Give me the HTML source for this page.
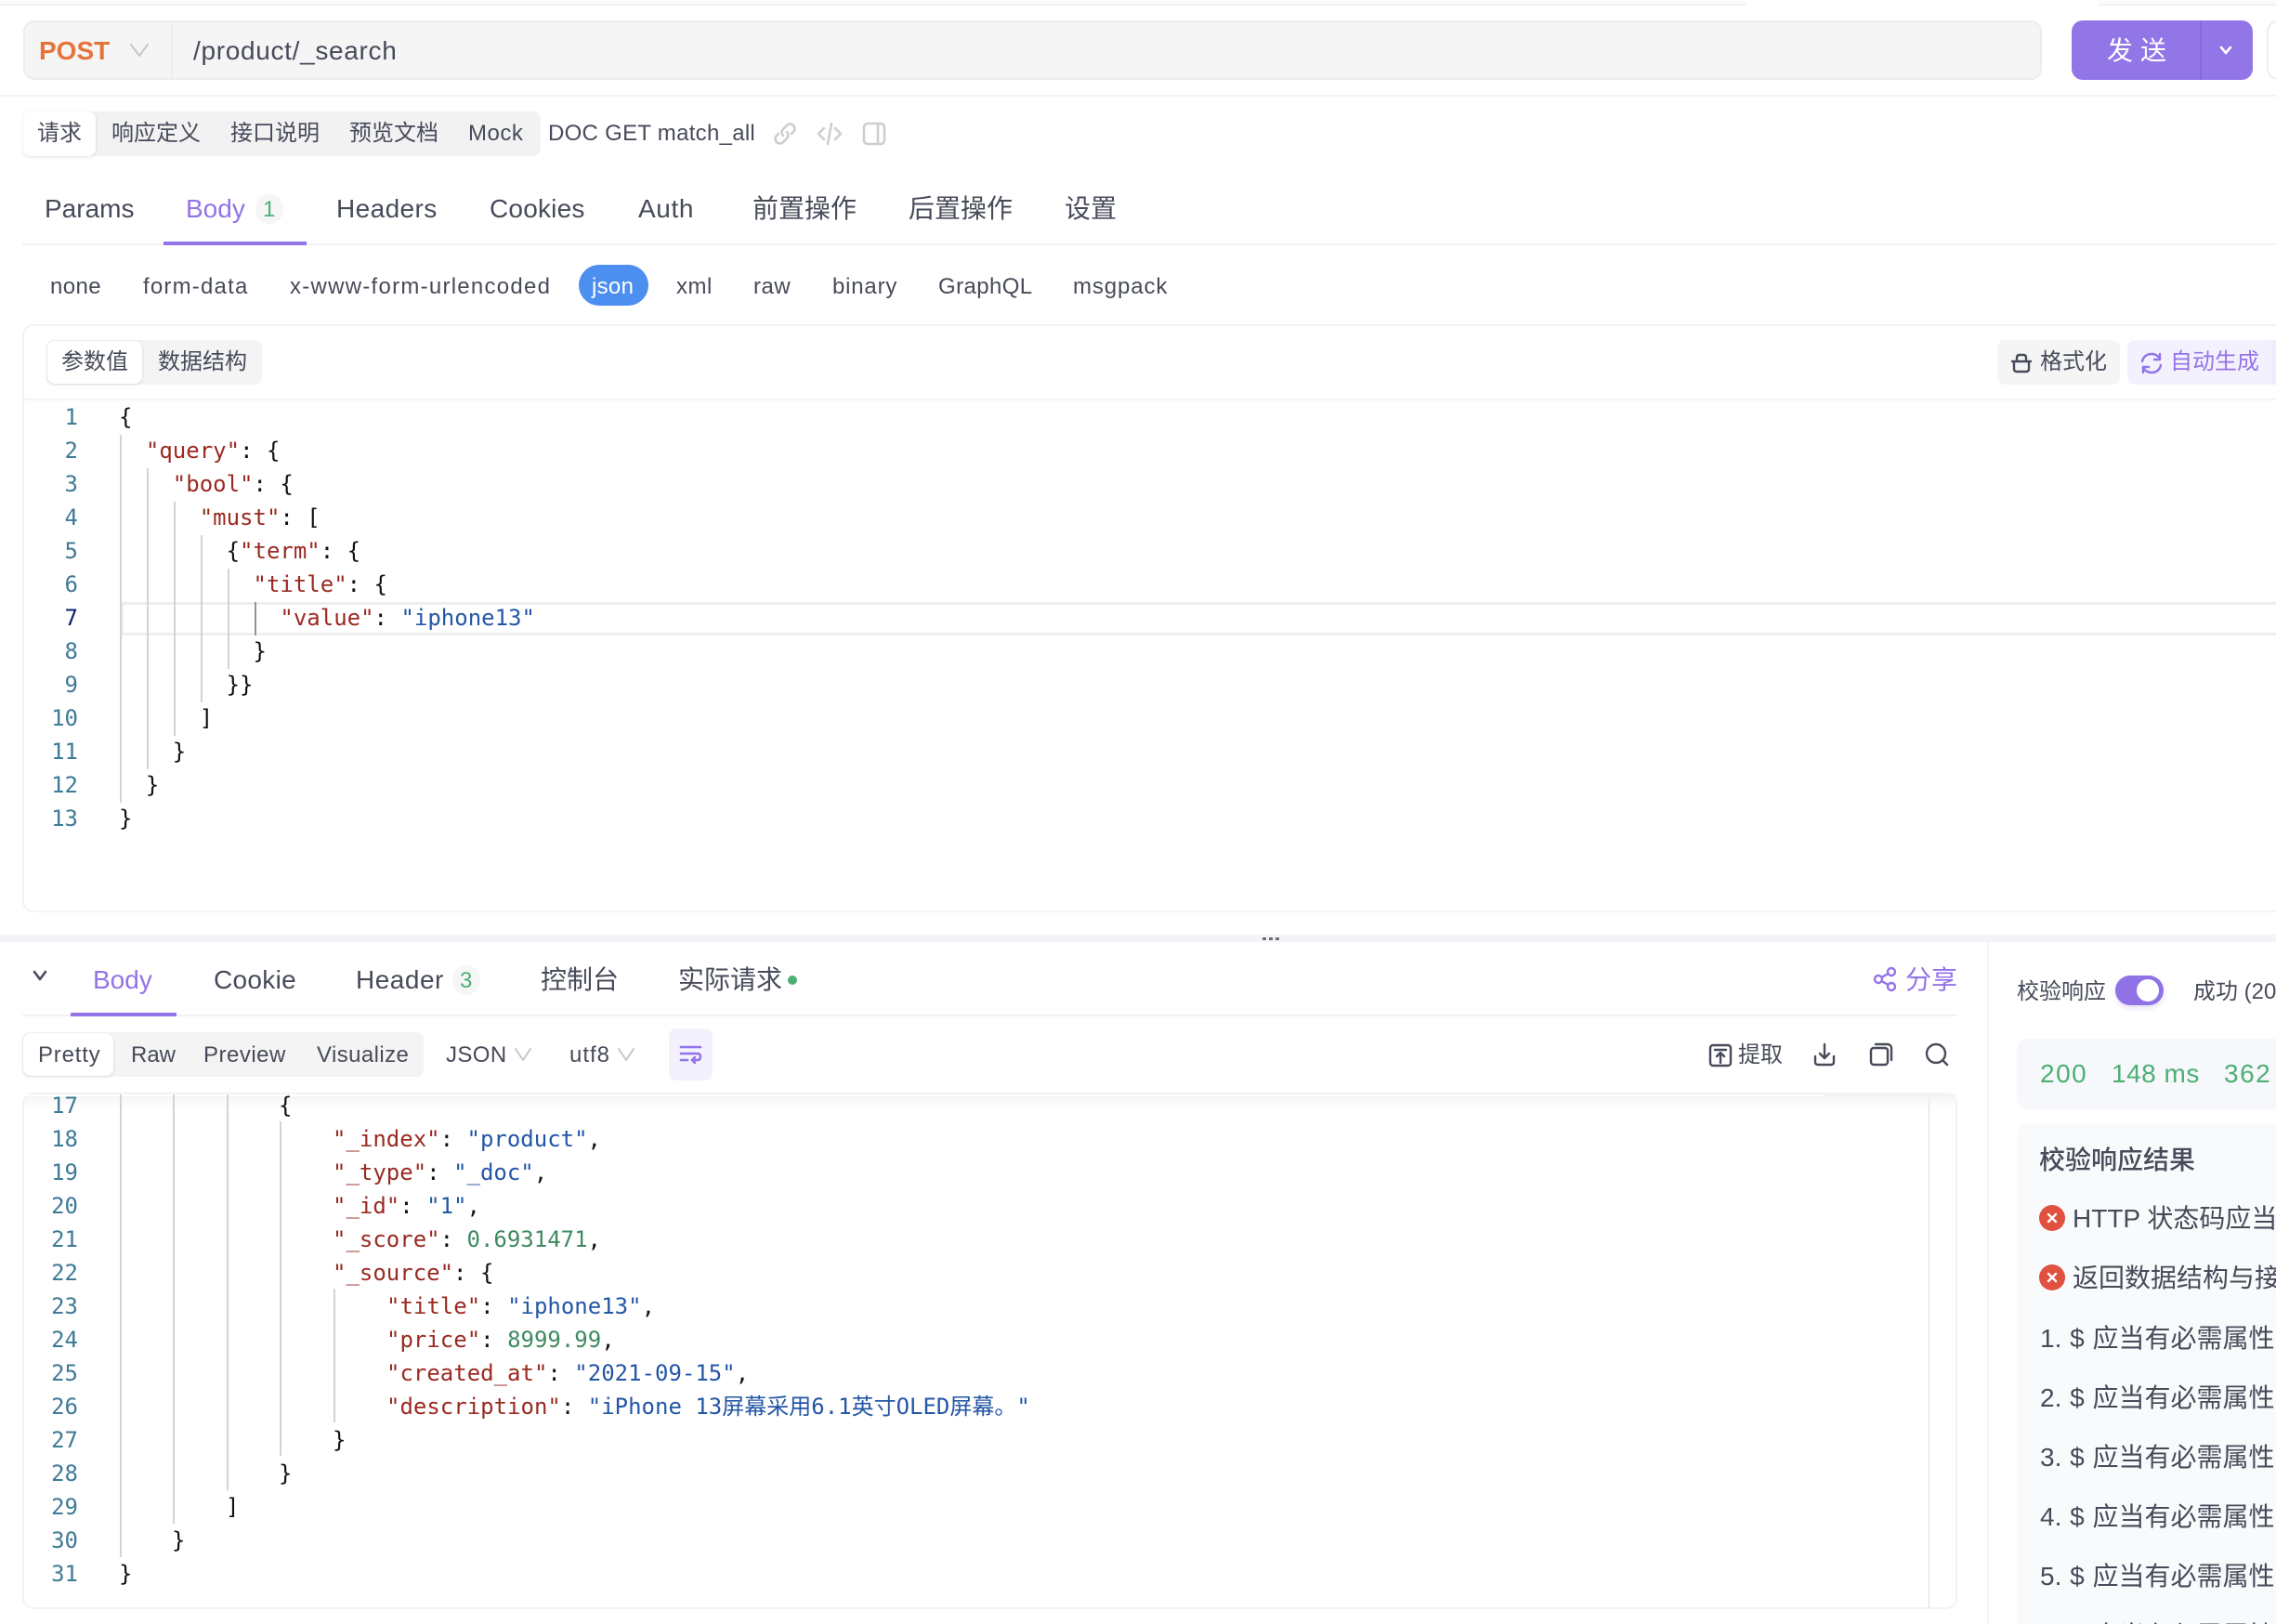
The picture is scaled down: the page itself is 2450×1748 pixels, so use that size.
<!DOCTYPE html>
<html><head><meta charset="utf-8"><style>
*{box-sizing:border-box}
html,body{margin:0;padding:0;background:#fff}
#p{position:relative;width:2450px;height:1748px;overflow:hidden;background:#fff;font-family:"Liberation Sans","Noto Sans CJK SC",sans-serif;color:#474b59}
#p div,#p svg{position:absolute}
.t{height:40px;line-height:40px;white-space:nowrap;font-size:28px;margin-top:1px}
.s{font-size:24px;margin-top:2px}
.pu{color:#9373e8}
.c{font-family:"DejaVu Sans Mono","Noto Sans CJK SC",monospace;font-size:24px;line-height:36px;height:36px;white-space:pre;color:#111;margin-top:1px}
.n{font-family:"DejaVu Sans Mono",monospace;font-size:24px;line-height:36px;height:36px;color:#3f7a96;width:60px;left:24px;text-align:right;margin-top:1px}
.g{width:2px;background:#d3d3d3}
i{font-style:normal}
.k{color:#9a2a22}.v{color:#2456a6}.m{color:#3f8a60}
svg{fill:none;stroke-linecap:round;stroke-linejoin:round}
</style></head><body><div id="p">
<!-- top band -->
<div style="left:0;top:0;width:1880px;height:6px;background:#fbfbf9;border-bottom:2px solid #f2f2f5"></div>
<div style="left:2258px;top:0;width:192px;height:6px;background:#fbfbf9;border-bottom:2px solid #f2f2f5"></div>

<!-- url bar -->
<div style="left:25px;top:22px;width:2173px;height:64px;background:#f5f5f5;border:2px solid #ededf1;border-radius:12px"></div>
<div style="left:184px;top:24px;width:2px;height:60px;background:#ededf1"></div>
<div class="t" style="left:42px;top:34px;font-weight:700;color:#e5743a">POST</div>
<svg style="left:139px;top:45px" width="22" height="18" viewBox="0 0 22 18" stroke="#c6c6cb" stroke-width="2"><path d="M2 3l9 12 9-12"/></svg>
<div class="t" style="left:208px;top:34px;letter-spacing:.68px">/product/_search</div>
<div style="left:2230px;top:22px;width:195px;height:64px;background:#9276e8;border-radius:12px"></div>
<div style="left:2368px;top:22px;width:2px;height:64px;background:#8669dc"></div>
<div class="t" style="left:2268px;top:34px;color:#fff;letter-spacing:8px">发送</div>
<svg style="left:2388px;top:47px" width="16" height="14" viewBox="0 0 16 14" stroke="#fff" stroke-width="2.6"><path d="M3 4l5 6 5-6"/></svg>
<div style="left:2440px;top:22px;width:30px;height:64px;border:2px solid #ededf1;border-radius:12px"></div>
<div style="left:0;top:102px;width:2450px;height:2px;background:#f2f2f6"></div>

<!-- doc tabs -->
<div style="left:25px;top:120px;width:557px;height:48px;background:#f2f2f3;border-radius:8px"></div>
<div style="left:25px;top:120px;width:78px;height:48px;background:#fff;border-radius:8px;box-shadow:0 1px 3px rgba(60,60,90,.15)"></div>
<div class="t s" style="left:40px;top:122px">请求</div>
<div class="t s" style="left:120px;top:122px">响应定义</div>
<div class="t s" style="left:248px;top:122px">接口说明</div>
<div class="t s" style="left:376px;top:122px">预览文档</div>
<div class="t s" style="left:504px;top:122px;letter-spacing:.5px">Mock</div>
<div class="t s" style="left:590px;top:122px;letter-spacing:.28px">DOC GET match_all</div>
<svg style="left:831px;top:130px" width="28" height="28" viewBox="0 0 28 28" stroke="#cdcdd2" stroke-width="2.6"><path d="M12 16c-2-2-2-5 0-7l4-4c2-2 5-2 7 0s2 5 0 7l-2 2"/><path d="M16 12c2 2 2 5 0 7l-4 4c-2 2-5 2-7 0s-2-5 0-7l2-2"/></svg>
<svg style="left:879px;top:130px" width="28" height="28" viewBox="0 0 28 28" stroke="#cdcdd2" stroke-width="2.6"><path d="M8 8l-6 6 6 6M20 8l6 6-6 6M16 3l-4 22"/></svg>
<svg style="left:928px;top:131px" width="26" height="26" viewBox="0 0 26 26" stroke="#cdcdd2" stroke-width="2.6"><rect x="2" y="2" width="22" height="22" rx="4"/><path d="M17 2v22"/></svg>

<!-- request tabs -->
<div class="t" style="left:48px;top:204px">Params</div>
<div class="t pu" style="left:200px;top:204px">Body</div>
<div style="left:275px;top:209px;width:30px;height:32px;border-radius:16px;background:#f6f6f7"></div>
<div class="t s" style="left:283px;top:204px;color:#4caf73">1</div>
<div class="t" style="left:362px;top:204px;letter-spacing:.4px">Headers</div>
<div class="t" style="left:527px;top:204px;letter-spacing:.2px">Cookies</div>
<div class="t" style="left:687px;top:204px;letter-spacing:.6px">Auth</div>
<div class="t" style="left:810px;top:204px">前置操作</div>
<div class="t" style="left:978px;top:204px">后置操作</div>
<div class="t" style="left:1146px;top:204px">设置</div>
<div style="left:24px;top:262px;width:2426px;height:2px;background:#f2f2f6"></div>
<div style="left:176px;top:260px;width:154px;height:4px;background:#9373e8"></div>

<!-- body types -->
<div class="t s" style="left:54px;top:287px;letter-spacing:.4px">none</div>
<div class="t s" style="left:154px;top:287px;letter-spacing:1.2px">form-data</div>
<div class="t s" style="left:312px;top:287px;letter-spacing:1.26px">x-www-form-urlencoded</div>
<div style="left:623px;top:285px;width:75px;height:44px;border-radius:22px;background:#4d8ff0"></div>
<div class="t s" style="left:637px;top:287px;color:#fff;letter-spacing:.3px">json</div>
<div class="t s" style="left:728px;top:287px;letter-spacing:.5px">xml</div>
<div class="t s" style="left:811px;top:287px;letter-spacing:.5px">raw</div>
<div class="t s" style="left:896px;top:287px;letter-spacing:.8px">binary</div>
<div class="t s" style="left:1010px;top:287px;letter-spacing:.4px">GraphQL</div>
<div class="t s" style="left:1155px;top:287px;letter-spacing:.9px">msgpack</div>

<!-- request panel -->
<div style="left:24px;top:349px;width:2460px;height:633px;border:2px solid #f3f3f5;border-radius:12px"></div>
<div style="left:26px;top:429px;width:2424px;height:2px;background:#f3f3f5"></div>
<div style="left:50px;top:366px;width:232px;height:48px;background:#f4f4f5;border-radius:8px"></div>
<div style="left:51px;top:367px;width:102px;height:46px;background:#fff;border-radius:8px;box-shadow:0 1px 3px rgba(60,60,90,.16)"></div>
<div class="t s" style="left:66px;top:368px">参数值</div>
<div class="t s" style="left:170px;top:368px">数据结构</div>
<div style="left:2150px;top:366px;width:132px;height:48px;background:#f5f5f6;border-radius:8px"></div>
<svg style="left:2164px;top:379px" width="24" height="24" viewBox="0 0 24 24" stroke="#474b59" stroke-width="2.4"><path d="M2 10h20M4 10v8c0 2 1 3 3 3h10c2 0 3-1 3-3v-8M7 10V6c0-2 1-3 3-3h4c2 0 3 1 3 3v4"/></svg>
<div class="t s" style="left:2196px;top:368px">格式化</div>
<div style="left:2290px;top:366px;width:155px;height:48px;background:#f4f1fe;border-radius:8px 0 0 8px"></div>
<div style="left:2445px;top:366px;width:5px;height:48px;background:#efecfb"></div>
<svg style="left:2304px;top:379px" width="24" height="24" viewBox="0 0 24 24" stroke="#9373e8" stroke-width="2.4"><path d="M2 10C3 5 7 2 12 2c4 0 7 2 9 5M22 14c-1 5-5 8-10 8-4 0-7-2-9-5M21 2v6h-6M3 22v-6h6"/></svg>
<div class="t s pu" style="left:2336px;top:368px">自动生成</div>

<!-- request code -->
<div style="left:130px;top:648px;width:2320px;height:36px;border:3px solid #eeeeef;border-right:0"></div>
<div class="g" style="left:129px;top:468px;height:396px"></div>
<div class="g" style="left:158px;top:504px;height:324px"></div>
<div class="g" style="left:187px;top:540px;height:252px"></div>
<div class="g" style="left:216px;top:576px;height:180px"></div>
<div class="g" style="left:245px;top:612px;height:108px"></div>
<div class="g" style="left:274px;top:648px;height:36px;background:#939393"></div>

<div class="n" style="top:430px">1</div><div class="c" style="left:128px;top:430px">{</div>
<div class="n" style="top:466px">2</div><div class="c" style="left:128px;top:466px">  <i class="k">"query"</i>: {</div>
<div class="n" style="top:502px">3</div><div class="c" style="left:128px;top:502px">    <i class="k">"bool"</i>: {</div>
<div class="n" style="top:538px">4</div><div class="c" style="left:128px;top:538px">      <i class="k">"must"</i>: [</div>
<div class="n" style="top:574px">5</div><div class="c" style="left:128px;top:574px">        {<i class="k">"term"</i>: {</div>
<div class="n" style="top:610px">6</div><div class="c" style="left:128px;top:610px">          <i class="k">"title"</i>: {</div>
<div class="n" style="top:646px;color:#0b216f">7</div><div class="c" style="left:128px;top:646px">            <i class="k">"value"</i>: <i class="v">"iphone13"</i></div>
<div class="n" style="top:682px">8</div><div class="c" style="left:128px;top:682px">          }</div>
<div class="n" style="top:718px">9</div><div class="c" style="left:128px;top:718px">        }}</div>
<div class="n" style="top:754px">10</div><div class="c" style="left:128px;top:754px">      ]</div>
<div class="n" style="top:790px">11</div><div class="c" style="left:128px;top:790px">    }</div>
<div class="n" style="top:826px">12</div><div class="c" style="left:128px;top:826px">  }</div>
<div class="n" style="top:862px">13</div><div class="c" style="left:128px;top:862px">}</div>

<!-- split -->
<div style="left:0;top:1006px;width:2450px;height:8px;background:#f3f4f8"></div>
<div style="left:1359px;top:1009px;width:4px;height:3px;background:#6d6d78;box-shadow:7px 0 #6d6d78,14px 0 #6d6d78"></div>

<!-- response tabs -->
<svg style="left:33px;top:1043px" width="20" height="16" viewBox="0 0 20 16" stroke="#474b59" stroke-width="2.6"><path d="M4 3l6 8 6-8"/></svg>
<div class="t pu" style="left:100px;top:1034px">Body</div>
<div class="t" style="left:230px;top:1034px;letter-spacing:.3px">Cookie</div>
<div class="t" style="left:383px;top:1034px;letter-spacing:.5px">Header</div>
<div style="left:487px;top:1039px;width:30px;height:32px;border-radius:16px;background:#f6f6f7"></div>
<div class="t s" style="left:495px;top:1034px;color:#4caf73">3</div>
<div class="t" style="left:582px;top:1034px">控制台</div>
<div class="t" style="left:730px;top:1034px">实际请求</div>
<div style="left:848px;top:1050px;width:10px;height:10px;border-radius:5px;background:#4caf73"></div>
<svg style="left:2016px;top:1040px" width="26" height="28" viewBox="0 0 26 28" stroke="#9373e8" stroke-width="2.4"><circle cx="20" cy="6" r="4"/><circle cx="6" cy="14" r="4"/><circle cx="20" cy="22" r="4"/><path d="M9.5 12l7-4M9.5 16l7 4"/></svg>
<div class="t pu" style="left:2051px;top:1034px">分享</div>
<div style="left:24px;top:1092px;width:2083px;height:2px;background:#f2f2f6"></div>
<div style="left:76px;top:1090px;width:114px;height:4px;background:#9373e8"></div>
<div style="left:2139px;top:1014px;width:2px;height:734px;background:#f3f4f8"></div>

<!-- response toolbar -->
<div style="left:24px;top:1111px;width:432px;height:48px;background:#f4f4f5;border-radius:8px"></div>
<div style="left:25px;top:1112px;width:97px;height:46px;background:#fff;border-radius:8px;box-shadow:0 1px 3px rgba(60,60,90,.16)"></div>
<div class="t s" style="left:41px;top:1114px;letter-spacing:.8px">Pretty</div>
<div class="t s" style="left:141px;top:1114px">Raw</div>
<div class="t s" style="left:219px;top:1114px;letter-spacing:.5px">Preview</div>
<div class="t s" style="left:341px;top:1114px;letter-spacing:.4px">Visualize</div>
<div class="t s" style="left:480px;top:1114px;letter-spacing:.4px">JSON</div>
<svg style="left:553px;top:1127px" width="20" height="16" viewBox="0 0 20 16" stroke="#c6c6cb" stroke-width="2"><path d="M2 2l8 12 8-12"/></svg>
<div class="t s" style="left:613px;top:1114px;letter-spacing:1px">utf8</div>
<svg style="left:664px;top:1127px" width="20" height="16" viewBox="0 0 20 16" stroke="#c6c6cb" stroke-width="2"><path d="M2 2l8 12 8-12"/></svg>
<div style="left:720px;top:1107px;width:47px;height:56px;border-radius:8px;background:#f4f1fe"></div>
<svg style="left:731px;top:1125px" width="25" height="20" viewBox="0 0 25 20" stroke="#9373e8" stroke-width="2.6"><path d="M2 2h21M2 9h18c4 0 4 7 0 7h-5M17 13l-3 3 3 3M2 16h7"/></svg>
<svg style="left:1839px;top:1123px" width="26" height="26" viewBox="0 0 26 26" stroke="#474b59" stroke-width="2.4"><rect x="2" y="2" width="22" height="22" rx="3"/><path d="M7 7h12M13 21V11M9 14l4-4 4 4"/></svg>
<div class="t s" style="left:1871px;top:1114px">提取</div>
<svg style="left:1951px;top:1122px" width="26" height="26" viewBox="0 0 26 26" stroke="#474b59" stroke-width="2.4"><path d="M13 2v15M8 12l5 5 5-5M3 15v6c0 2 1 3 3 3h14c2 0 3-1 3-3v-6"/></svg>
<svg style="left:2012px;top:1122px" width="26" height="26" viewBox="0 0 26 26" stroke="#474b59" stroke-width="2.4"><rect x="2" y="6" width="18" height="18" rx="3"/><path d="M7 2h13c2 0 4 2 4 4v13"/></svg>
<svg style="left:2072px;top:1122px" width="26" height="26" viewBox="0 0 26 26" stroke="#474b59" stroke-width="2.4"><circle cx="12" cy="12" r="10"/><path d="M19 19l5 5"/></svg>

<!-- response code -->
<div style="left:24px;top:1176px;width:2083px;height:556px;border:2px solid #f3f3f5;border-radius:12px"></div>
<div style="left:2076px;top:1178px;width:1px;height:552px;background:#dcdcdc"></div>
<div style="left:26px;top:1178px;width:2079px;height:14px;background:linear-gradient(#f3f3f3,rgba(255,255,255,0))"></div>
<div style="left:26px;top:1178px;width:1936px;height:2px;background:#fff"></div>

<div class="g" style="left:129px;top:1178px;height:498px"></div>
<div class="g" style="left:186px;top:1178px;height:462px"></div>
<div class="g" style="left:244px;top:1178px;height:426px"></div>
<div class="g" style="left:301px;top:1207px;height:360px"></div>
<div class="g" style="left:359px;top:1387px;height:144px"></div>
<div class="n" style="top:1171px">17</div><div class="c" style="left:300px;top:1171px">{</div>
<div class="n" style="top:1207px">18</div><div class="c" style="left:358px;top:1207px"><i class="k">"_index"</i>: <i class="v">"product"</i>,</div>
<div class="n" style="top:1243px">19</div><div class="c" style="left:358px;top:1243px"><i class="k">"_type"</i>: <i class="v">"_doc"</i>,</div>
<div class="n" style="top:1279px">20</div><div class="c" style="left:358px;top:1279px"><i class="k">"_id"</i>: <i class="v">"1"</i>,</div>
<div class="n" style="top:1315px">21</div><div class="c" style="left:358px;top:1315px"><i class="k">"_score"</i>: <i class="m">0.6931471</i>,</div>
<div class="n" style="top:1351px">22</div><div class="c" style="left:358px;top:1351px"><i class="k">"_source"</i>: {</div>
<div class="n" style="top:1387px">23</div><div class="c" style="left:416px;top:1387px"><i class="k">"title"</i>: <i class="v">"iphone13"</i>,</div>
<div class="n" style="top:1423px">24</div><div class="c" style="left:416px;top:1423px"><i class="k">"price"</i>: <i class="m">8999.99</i>,</div>
<div class="n" style="top:1459px">25</div><div class="c" style="left:416px;top:1459px"><i class="k">"created_at"</i>: <i class="v">"2021-09-15"</i>,</div>
<div class="n" style="top:1495px">26</div><div class="c" style="left:416px;top:1495px"><i class="k">"description"</i>: <i class="v">"iPhone 13屏幕采用6.1英寸OLED屏幕。"</i></div>
<div class="n" style="top:1531px">27</div><div class="c" style="left:358px;top:1531px">}</div>
<div class="n" style="top:1567px">28</div><div class="c" style="left:300px;top:1567px">}</div>
<div class="n" style="top:1603px">29</div><div class="c" style="left:243px;top:1603px">]</div>
<div class="n" style="top:1639px">30</div><div class="c" style="left:185px;top:1639px">}</div>
<div class="n" style="top:1675px">31</div><div class="c" style="left:128px;top:1675px">}</div>

<!-- right panel -->
<div class="t s" style="left:2171px;top:1046px">校验响应</div>
<div style="left:2277px;top:1050px;width:52px;height:32px;border-radius:16px;background:#8f72e6;box-shadow:0 3px 6px rgba(120,100,200,.2)"></div>
<div style="left:2300px;top:1054px;width:24px;height:24px;border-radius:12px;background:#fff"></div>
<div class="t s" style="left:2361px;top:1046px">成功 (200)</div>
<div style="left:2171px;top:1118px;width:300px;height:76px;border-radius:12px;background:#f7f8fb"></div>
<div class="t" style="left:2196px;top:1135px;color:#4caf73;letter-spacing:1.5px">200</div>
<div class="t" style="left:2273px;top:1135px;color:#4caf73;letter-spacing:.5px">148 ms</div>
<div class="t" style="left:2394px;top:1135px;color:#4caf73;letter-spacing:1.5px">362 B</div>
<div style="left:2171px;top:1209px;width:300px;height:560px;border-radius:12px;background:#f9fafc"></div>
<div class="t" style="left:2195px;top:1228px;font-weight:500;color:#474b59">校验响应结果</div>
<svg style="left:2195px;top:1297px" width="28" height="28" viewBox="0 0 28 28"><circle cx="14" cy="14" r="14" fill="#e05140"/><path d="M10 10l8 8M18 10l-8 8" stroke="#fff" stroke-width="2.4"/></svg>
<div class="t" style="left:2231px;top:1291px">HTTP 状态码应当为 200</div>
<svg style="left:2195px;top:1361px" width="28" height="28" viewBox="0 0 28 28"><circle cx="14" cy="14" r="14" fill="#e05140"/><path d="M10 10l8 8M18 10l-8 8" stroke="#fff" stroke-width="2.4"/></svg>
<div class="t" style="left:2231px;top:1355px">返回数据结构与接口定义一致</div>
<div class="t" style="left:2196px;top:1420px;word-spacing:1px">1. $ 应当有必需属性</div>
<div class="t" style="left:2196px;top:1484px;word-spacing:1px">2. $ 应当有必需属性</div>
<div class="t" style="left:2196px;top:1548px;word-spacing:1px">3. $ 应当有必需属性</div>
<div class="t" style="left:2196px;top:1612px;word-spacing:1px">4. $ 应当有必需属性</div>
<div class="t" style="left:2196px;top:1676px;word-spacing:1px">5. $ 应当有必需属性</div>
<div class="t" style="left:2196px;top:1740px;word-spacing:1px">6. $ 应当有必需属性</div>
</div></body></html>
